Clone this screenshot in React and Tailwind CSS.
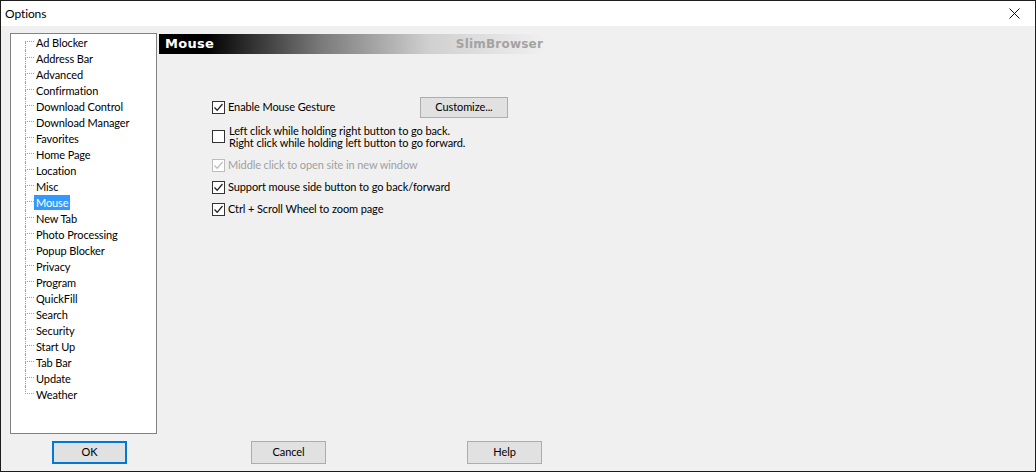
import React from 'react';

const items = [
  'Ad Blocker', 'Address Bar', 'Advanced', 'Confirmation', 'Download Control',
  'Download Manager', 'Favorites', 'Home Page', 'Location', 'Misc', 'Mouse',
  'New Tab', 'Photo Processing', 'Popup Blocker', 'Privacy', 'Program',
  'QuickFill', 'Search', 'Security', 'Start Up', 'Tab Bar', 'Update', 'Weather',
];

const font = { fontFamily: '"Segoe UI", Lato, "Liberation Sans", sans-serif' };

const Check = ({ checked, disabled }) => (
  <div
    className={`w-[13px] h-[13px] shrink-0 border bg-white flex items-center justify-center ${
      disabled ? 'border-[#bcbcbc]' : 'border-[#333333]'
    }`}
  >
    {checked && (
      <svg width="11" height="11" viewBox="0 0 11 11">
        <path
          d="M1.5 5.5 L4.2 8.3 L9.5 2"
          fill="none"
          stroke={disabled ? '#bcbcbc' : '#222'}
          strokeWidth="1.3"
        />
      </svg>
    )}
  </div>
);

const TreeRow = ({ label, first, last, selected }) => (
  <div className="flex h-[16px] items-stretch">
    <div className="w-[14px] shrink-0" />
    <div className="w-[9px] shrink-0 flex flex-col">
      <div
        className={`h-[8px] border-b border-dotted border-b-[#a0a0a0] ${
          first ? '' : 'border-l border-l-[#a0a0a0]'
        }`}
      />
      <div className={`h-[8px] ${last ? '' : 'border-l border-dotted border-l-[#a0a0a0]'}`} />
    </div>
    <div className="flex items-center">
      <span
        className={`px-[2px] leading-[15px] ${
          selected ? 'bg-[#3399ff] text-white' : 'text-black'
        }`}
      >
        {label}
      </span>
    </div>
  </div>
);

const Btn = ({ children, primary, className = '' }) => (
  <div
    className={`h-[23px] w-[75px] flex items-center justify-center bg-[#e1e1e1] text-black ${
      primary ? 'border-2 border-[#0078d7]' : 'border border-[#adadad]'
    } ${className}`}
  >
    {children}
  </div>
);

export default function App() {
  return (
    <div
      className="w-[1036px] h-[472px] border border-[#1c1c1c] flex flex-col text-[11px] tracking-[-0.1px] bg-[#f0f0f0] overflow-hidden"
      style={font}
    >
      {/* title bar */}
      <div className="h-[25px] bg-white flex items-center justify-between shrink-0">
        <span className="pl-[4px] text-black text-[12px]">Options</span>
        <div className="w-[30px] mr-[6px] flex justify-center">
          <svg width="11" height="11" viewBox="0 0 11 11">
            <path d="M0.5 0.5 L10.5 10.5 M10.5 0.5 L0.5 10.5" stroke="#111" strokeWidth="1" />
          </svg>
        </div>
      </div>

      {/* body */}
      <div className="flex-1 flex flex-col">
        <div className="flex mt-[7px] ml-[9px]">
          {/* tree */}
          <div className="w-[147px] h-[401px] border border-[#828282] bg-white">
            {items.map((it, i) => (
              <TreeRow
                key={it}
                label={it}
                first={i === 0}
                last={i === items.length - 1}
                selected={it === 'Mouse'}
              />
            ))}
          </div>

          {/* right panel */}
          <div className="ml-[2px] flex flex-col">
            <div className="w-[386px] h-[20px] mt-[1px] flex items-center justify-between bg-[linear-gradient(to_right,#000000_12%,#7a7a7a_42%,#d0d0d0_70%,#f0f0f0_100%)]">
              <span
                className="pl-[6px] text-white font-bold text-[13px] tracking-[0.3px]"
                style={{ fontFamily: '"DejaVu Sans", "Liberation Sans", sans-serif' }}
              >
                Mouse
              </span>
              <span
                className="pr-[2px] text-[#a3a3a3] font-bold text-[12px] tracking-[0.2px]"
                style={{ fontFamily: '"DejaVu Sans", "Liberation Sans", sans-serif' }}
              >
                SlimBrowser
              </span>
            </div>

            <div className="pl-[53px] flex flex-col text-black">
              <div className="mt-[43px] h-[21px] flex items-center">
                <div className="w-[208px] flex items-center gap-[3px]">
                  <Check checked />
                  <span>Enable Mouse Gesture</span>
                </div>
                <div className="w-[88px] h-[21px] border border-[#adadad] bg-[#e1e1e1] flex items-center justify-center">
                  Customize...
                </div>
              </div>

              <div className="mt-[6px] flex items-center gap-[4px]">
                <Check />
                <div className="leading-[12px] pt-[1px]">
                  <div>Left click while holding right button to go back.</div>
                  <div>Right click while holding left button to go forward.</div>
                </div>
              </div>

              <div className="mt-[8px] h-[16px] flex items-center gap-[3px] text-[#a0a0a0]">
                <Check checked disabled />
                <span>Middle click to open site in new window</span>
              </div>

              <div className="mt-[6px] h-[16px] flex items-center gap-[3px]">
                <Check checked />
                <span>Support mouse side button to go back/forward</span>
              </div>

              <div className="mt-[6px] h-[16px] flex items-center gap-[3px]">
                <Check checked />
                <span>Ctrl + Scroll Wheel to zoom page</span>
              </div>
            </div>
          </div>
        </div>

        {/* buttons */}
        <div className="flex mt-[7px] ml-[51px]">
          <Btn primary>OK</Btn>
          <Btn className="ml-[124px]">Cancel</Btn>
          <Btn className="ml-[141px]">Help</Btn>
        </div>
      </div>
    </div>
  );
}
